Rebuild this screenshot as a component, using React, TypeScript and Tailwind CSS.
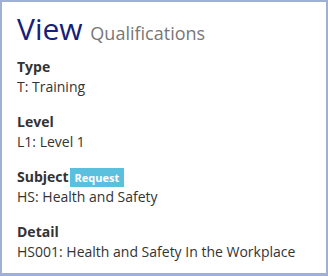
export default function App() {
  const rows = [
    { label: "Type", value: "T: Training" },
    { label: "Level", value: "L1: Level 1" },
    { label: "Subject", value: "HS: Health and Safety", badge: "Request" },
    { label: "Detail", value: "HS001: Health and Safety In the Workplace" },
  ];

  return (
    <div className="w-[328px] h-[276px] bg-white font-['Open_Sans',sans-serif] text-[#333]">
      <div className="h-full border-t-2 border-x-2 border-b-[3px] border-[#a0b0d4] px-[15px] pt-[10px]">
        <h1 className="text-[30px] leading-[33px] text-[#14207a] font-normal">
          View <span className="text-[18px] text-[#777]">Qualifications</span>
        </h1>
        <div className="mt-[7px] flex flex-col gap-[15px]">
          {rows.map((r) => (
            <div key={r.label} className="text-[14px] leading-[20px]">
              <div className="flex items-baseline font-bold">
                {r.label}
                {r.badge && (
                  <span className="ml-[1px] bg-[#5bc0de] text-white text-[11px] leading-[13px] font-bold px-[5px] pt-[3px] pb-[3px]">
                    {r.badge}
                  </span>
                )}
              </div>
              <div>{r.value}</div>
            </div>
          ))}
        </div>
      </div>
    </div>
  );
}
